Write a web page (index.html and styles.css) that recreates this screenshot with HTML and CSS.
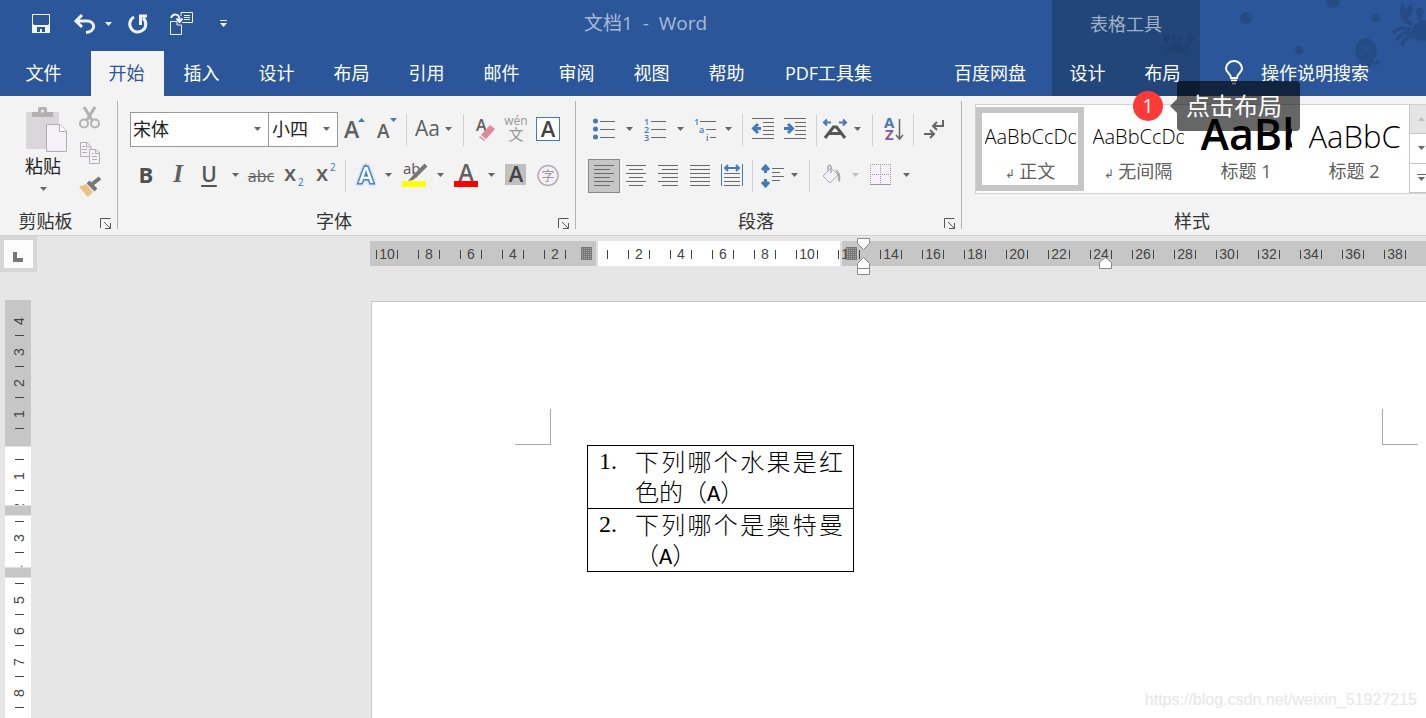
FILE: index.html
```html
<!DOCTYPE html>
<html lang="zh-CN">
<head>
<meta charset="utf-8">
<title>文档1 - Word</title>
<link rel="stylesheet" href="styles.css">
</head>
<body>
<header class="header">
  <svg class="decor" width="280" height="96" viewBox="0 0 280 96" aria-hidden="true">
    <defs>
      <g id="crab">
        <path d="M-8 6 C-8 -6 8 -6 8 6 L4 8 H-4 Z"/>
        <path d="M-8 0 C-14 -3 -15 -8 -13 -13 L-10 -9 L-8 -13 C-5 -8 -8 -5 -10 -4 L-6 -1 Z M8 0 C13 -1 12 -3 12 -5 C9 -7 10 -10 13 -12 L14 -8 L18 -9 C18 -4 15 -3 14 -2 C14 2 10 3 8 3 Z"/>
        <path d="M-8 2 C-13 0 -16 2 -18 4 M-8 4 C-13 3 -14 6 -16 8 M-7 6 C-11 6 -12 9 -13 11 M8 4 C12 4 14 6 17 6 M7 6 C11 7 12 9 14 10 M6 7 C9 9 10 11 11 13 M-3 -3 V-8 M3 -3 V-8" fill="none" stroke="#1e3a66" stroke-width="2"/>
        <circle cx="-3" cy="-8" r="2"/><circle cx="3" cy="-8" r="2"/>
      </g>
    </defs>
    <g fill="#1e3a66" opacity=".4">
      <use href="#crab" transform="translate(31 45)"/>
      <use href="#crab" transform="translate(279 26) scale(1.8)"/>
      <circle cx="100" cy="18" r="6"/><circle cx="230" cy="18" r="4"/><circle cx="187" cy="1" r="7"/><circle cx="153" cy="50" r="4"/>
      <path d="M211 58 C203 32 236 32 230 57 L227 59 C228 62 231 62 231 59 L234 61 C232 67 227 65 224 62 L226 67 H222 L219 62 L216 66 L212 63 L215 60 Z"/>
    </g>
    <g fill="none" stroke="#2b579a" stroke-width="1"><circle cx="215" cy="50" r="3"/><circle cx="223" cy="49" r="3"/><circle cx="103" cy="16" r="1"/><circle cx="232" cy="17" r="1"/></g>
  </svg>
  <div class="titlebar">
    <div class="quick-access">
      <button aria-label="保存"><svg width="20" height="20" viewBox="0 0 20 20"><path fill="#f2f2f2" fill-rule="evenodd" d="M1 0H19V19H1ZM2 1V10L3 11H17L18 10V1ZM6 13V18H9V15H11V18H14V13Z"/></svg></button>
      <button aria-label="撤消"><svg width="22" height="20" viewBox="0 0 22 20"><path d="M1 7H13C22 7 22 18 12 18.500M8 1L2 7L8 13" fill="none" stroke="#f2f2f2" stroke-width="3"/></svg></button>
      <button aria-label="撤消选项"><svg width="9" height="5"><path d="M1 0H8L4.500 4Z" fill="#f2f2f2"/></svg></button>
      <button aria-label="重复"><svg width="20" height="20" viewBox="0 0 20 20"><path d="M6 3A8 8 0 1 0 15 4M12.500 11V2H19" fill="none" stroke="#f2f2f2" stroke-width="3"/></svg></button>
      <button aria-label="粘贴到文档"><svg width="24" height="24" viewBox="0 0 24 24" fill="none" stroke="#f2f2f2"><path d="M.5 9.500H7V13H11.500V22.500H.5ZM11 4V.5H22.500V10.500H12M14 3.500H20M14 5.500H20M14 7.500H20"/><path d="M1 6C3 1 10 1 9.500 9M6.500 6.500L9.500 10L12.500 6.500" stroke-width="2"/></svg></button>
      <button aria-label="自定义快速访问工具栏"><svg width="9" height="8"><path d="M1 0H8V1H1ZM1 3H8L4.500 7Z" fill="#f2f2f2"/></svg></button>
    </div>
    <div class="doc-title">文档1&nbsp; -&nbsp; Word</div>
  </div>
  <nav class="tabs" aria-label="功能区">
    <button class="tab tab-file">文件</button>
    <button class="tab active">开始</button>
    <button class="tab">插入</button>
    <button class="tab">设计</button>
    <button class="tab">布局</button>
    <button class="tab">引用</button>
    <button class="tab">邮件</button>
    <button class="tab">审阅</button>
    <button class="tab">视图</button>
    <button class="tab">帮助</button>
    <button class="tab tab-pdf">PDF工具集</button>
    <button class="tab tab-disk">百度网盘</button>
  </nav>
  <div class="context">
    <div class="context-title">表格工具</div>
    <div class="context-tabs">
      <button class="tab">设计</button>
      <button class="tab">布局</button>
    </div>
    <span class="step">1</span>
    <span class="tip">点击布局</span>
  </div>
  <label class="tell-me">
    <svg width="18" height="25" viewBox="0 0 18 25" fill="none" stroke="#fff" stroke-width="2"><path d="M6 18C6 13 1 13 1 8.500A8 7.500 0 0 1 17 8.500C17 13 12 13 12 18ZM6 20.500H12M7 23.500H11"/></svg>
    <input type="text" placeholder="操作说明搜索" aria-label="操作说明搜索">
  </label>
</header>

<section class="ribbon">
  <div class="group clipboard">
    <div class="clip-body">
      <button class="paste">
        <svg width="42" height="46" viewBox="0 0 42 46"><rect y="5" width="33" height="37" rx="1" fill="#dad6da"/><path d="M6 5H12V2Q12 0 14 0H19Q21 0 21 2V5H27V10H6Z" fill="#b1b1b1"/><circle cx="16.500" cy="4" r="1.500" fill="#f2f2f2"/><path d="M20.500 17.500H34L40.500 24V44.500H20.500Z" fill="#f6f1f9" stroke="#b1adb1"/><path d="M33.500 17.500V24.500H40.500" fill="#fff" stroke="#b1adb1"/></svg>
        <span>粘贴</span>
        <svg class="caret" width="9" height="5"><path d="M1 0H8L4.500 4Z"/></svg>
      </button>
      <div class="clip-tools">
        <button aria-label="剪切"><svg width="22" height="23" viewBox="0 0 22 23" fill="none" stroke="#b1b1b1"><path d="M5 1L13 14M16 1L8 14" stroke-width="3"/><circle cx="5" cy="17.500" r="4" stroke-width="2"/><circle cx="16" cy="17.500" r="4" stroke-width="2"/></svg></button>
        <button aria-label="复制"><svg width="22" height="23" viewBox="0 0 22 23" fill="#f6f1f9" stroke="#b1adb1"><path d="M1.500 1.500H8L12 5.500V15.500H1.500ZM7.500 1.500V6H12M3 5.500H6M3 8.500H8M3 11.500H8"/><path d="M10.500 8.500H17L20.500 12V22.500H10.500ZM16.500 8.500V12.500H20.500M13 12.500H15M13 15.500H18M13 18.500H18"/></svg></button>
        <button aria-label="格式刷"><svg width="24" height="23" viewBox="0 0 24 23"><path d="M1 11L8 8L15 16L10 21Z" fill="#eac282"/><path d="M10 6L18 14M13 9L22 2" stroke="#777" stroke-width="4" fill="none"/></svg></button>
      </div>
    </div>
    <div class="group-label"><span>剪贴板</span><button class="launcher" aria-label="剪贴板设置"><svg width="12" height="12"><use href="#launch"/></svg></button></div>
  </div>

  <div class="group font">
    <div class="row font-row-1">
      <span class="combo"><select aria-label="字体"><option>宋体</option></select><svg class="caret" width="9" height="5"><path d="M1 0H8L4.500 4Z"/></svg></span>
      <span class="combo combo-size"><select aria-label="字号"><option>小四</option></select><svg class="caret" width="9" height="5"><path d="M1 0H8L4.500 4Z"/></svg></span>
      <button aria-label="增大字号"><svg width="22" height="26"><text class="glyph" x="1" y="21" font-size="23">A</text><path d="M15 5L18.500 1L22 5Z" fill="#4579b8"/></svg></button>
      <button aria-label="减小字号"><svg width="22" height="26"><text class="glyph" x="2" y="21" font-size="19">A</text><path d="M15 1H22L18.500 5Z" fill="#4579b8"/></svg></button>
      <i class="sep"></i>
      <button aria-label="更改大小写"><svg width="40" height="26"><text class="glyph-thin" x="1" y="19" font-size="21">Aa</text><path class="dark" d="M31 10H38L34.500 14Z"/></svg></button>
      <i class="sep"></i>
      <button aria-label="清除所有格式"><svg width="22" height="26"><text class="glyph" x="1" y="14" font-size="16">A</text><path d="M6 18L15 8L20 12L11 22ZM5 19L10 23L9 24L4 20Z" fill="#e5879a"/></svg></button>
      <button aria-label="拼音指南"><svg width="24" height="28"><text x="12" y="9" font-size="12" text-anchor="middle" fill="#999">wén</text><text x="12" y="24" font-size="15" text-anchor="middle" fill="#999">文</text></svg></button>
      <button aria-label="字符边框"><svg width="24" height="26"><rect x=".5" y=".5" width="23" height="23" fill="#fff" stroke="#4579b8"/><text class="glyph deep" x="12" y="20" font-size="22" text-anchor="middle">A</text></svg></button>
    </div>
    <div class="row font-row-2">
      <button class="bold" aria-label="加粗">B</button>
      <button class="italic" aria-label="倾斜">I</button>
      <button class="under" aria-label="下划线">U</button>
      <button aria-label="下划线选项"><svg class="caret" width="9" height="5"><path d="M1 0H8L4.500 4Z"/></svg></button>
      <button class="strike" aria-label="删除线">abc</button>
      <button aria-label="下标"><svg width="20" height="26"><text class="glyph" x="0" y="18" font-size="22">x</text><text x="14" y="23" font-size="10" fill="#2e75b6">2</text></svg></button>
      <button aria-label="上标"><svg width="20" height="26"><text class="glyph" x="0" y="18" font-size="22">x</text><text x="14" y="8" font-size="10" fill="#2e75b6">2</text></svg></button>
      <i class="sep"></i>
      <button aria-label="文本效果"><svg width="24" height="26"><text x="12" y="20" font-size="22" text-anchor="middle" font-weight="600" fill="#fff" stroke="#4a86c8" stroke-width="3" paint-order="stroke" class="glow">A</text></svg></button>
      <button aria-label="文本效果选项"><svg class="caret" width="9" height="5"><path d="M1 0H8L4.500 4Z"/></svg></button>
      <button aria-label="突出显示"><svg width="24" height="28"><text x="1" y="12" font-size="15" fill="#555">ab</text><path d="M24 3L13 14" stroke="#777" stroke-width="4"/><path d="M6 19L12 12L15 15L11 18Z" fill="#777"/><rect x="0" y="19" width="24" height="6" fill="#ff0"/></svg></button>
      <button aria-label="突出显示选项"><svg class="caret" width="9" height="5"><path d="M1 0H8L4.500 4Z"/></svg></button>
      <button aria-label="字体颜色"><svg width="24" height="28"><text class="glyph" x="12" y="19" font-size="23" text-anchor="middle">A</text><rect x="0" y="19" width="24" height="6" fill="#f00"/></svg></button>
      <button aria-label="字体颜色选项"><svg class="caret" width="9" height="5"><path d="M1 0H8L4.500 4Z"/></svg></button>
      <button aria-label="字符底纹"><svg width="22" height="24"><rect width="21" height="21" fill="#c0c0c0"/><text class="glyph deep" x="11" y="18" font-size="22" text-anchor="middle">A</text></svg></button>
      <button aria-label="带圈字符"><svg width="22" height="22"><circle cx="11" cy="10.500" r="10" fill="#f6f1f9" stroke="#b1adb1" stroke-width="1.500"/><text x="11" y="15" font-size="13" text-anchor="middle" fill="#999">字</text></svg></button>
    </div>
    <div class="group-label"><span>字体</span><button class="launcher" aria-label="字体设置"><svg width="12" height="12"><use href="#launch"/></svg></button></div>
  </div>

  <div class="group paragraph">
    <div class="row para-row-1">
      <button aria-label="项目符号"><svg width="24" height="26"><g fill="#4579b8"><circle cx="3.500" cy="4" r="2.500"/><circle cx="3.500" cy="12" r="2.500"/><circle cx="3.500" cy="20" r="2.500"/></g><path class="line" d="M8 4.500H23M8 12.500H23M8 20.500H23"/></svg></button>
      <button aria-label="项目符号选项"><svg class="caret" width="9" height="5"><path d="M1 0H8L4.500 4Z"/></svg></button>
      <button aria-label="编号"><svg width="24" height="26"><g fill="#4579b8" font-size="9" font-weight="600"><text x="1" y="8">1</text><text x="1" y="16">2</text><text x="1" y="24">3</text></g><path class="line" d="M8 4.500H23M8 12.500H23M8 20.500H23"/></svg></button>
      <button aria-label="编号选项"><svg class="caret" width="9" height="5"><path d="M1 0H8L4.500 4Z"/></svg></button>
      <button aria-label="多级列表"><svg width="24" height="26"><g fill="#4579b8" font-size="9" font-weight="600"><text x="1" y="8">1</text><text x="6" y="16">a</text><text x="13" y="24">i</text></g><path class="line" d="M7 4.500H23M13 12.500H23M17 20.500H23"/></svg></button>
      <button aria-label="多级列表选项"><svg class="caret" width="9" height="5"><path d="M1 0H8L4.500 4Z"/></svg></button>
      <i class="sep"></i>
      <button aria-label="减少缩进量"><svg width="22" height="24"><path class="line" d="M0 .5H22M11 4.500H22M11 8.500H22M11 12.500H22M11 16.500H22M0 20.500H22"/><path class="arrow" d="M9 10.500H2M6 6L1.500 10.500L6 15"/></svg></button>
      <button aria-label="增加缩进量"><svg width="22" height="24"><path class="line" d="M0 .5H22M11 4.500H22M11 8.500H22M11 12.500H22M11 16.500H22M0 20.500H22"/><path class="arrow" d="M0 10.500H8M4 6L8.500 10.500L4 15"/></svg></button>
      <i class="sep"></i>
      <button aria-label="中文版式"><svg width="24" height="24"><path class="arrow thin" d="M8 4.500H1M4 1.500L1 4.500L4 7.500M16 4.500H23M20 1.500L23 4.500L20 7.500"/><path d="M2 20L10.500 9H13.500L22 20M6 15.500H18" fill="none" stroke="#555" stroke-width="3"/></svg></button>
      <button aria-label="中文版式选项"><svg class="caret" width="9" height="5"><path d="M1 0H8L4.500 4Z"/></svg></button>
      <i class="sep"></i>
      <button aria-label="排序"><svg width="20" height="28"><text x="0" y="12" font-size="15" font-weight="700" fill="#4579b8">A</text><text x="1" y="24" font-size="15" font-weight="700" fill="#8a56a5">Z</text><path d="M15.500 3V22M12 19L15.500 23L19 19" fill="none" stroke="#666" stroke-width="1.500"/></svg></button>
      <i class="sep"></i>
      <button aria-label="显示编辑标记"><svg width="20" height="22" fill="none" stroke="#666" stroke-width="2"><path d="M19 1V7H9M13 3L9 7L13 11M0 15H10M6 11L10 15L6 19"/></svg></button>
    </div>
    <div class="row para-row-2">
      <button class="pressed" aria-label="左对齐" aria-pressed="true"><svg width="20" height="22"><path class="line" d="M0 .5H20M0 4.500H16M0 8.500H20M0 12.500H16M0 16.500H20M0 20.500H16"/></svg></button>
      <button aria-label="居中"><svg width="20" height="22"><path class="line" d="M0 .5H20M3 4.500H17M0 8.500H20M3 12.500H17M0 16.500H20M3 20.500H17"/></svg></button>
      <button aria-label="右对齐"><svg width="20" height="22"><path class="line" d="M0 .5H20M4 4.500H20M0 8.500H20M4 12.500H20M0 16.500H20M4 20.500H20"/></svg></button>
      <button aria-label="两端对齐"><svg width="20" height="22"><path class="line" d="M0 .5H20M0 4.500H20M0 8.500H20M0 12.500H20M0 16.500H20M0 20.500H20"/></svg></button>
      <button aria-label="分散对齐"><svg width="22" height="24"><path d="M.5 0V22M21.500 0V22" stroke="#4579b8"/><path class="line" d="M3 9.500H19M3 13.500H19M3 17.500H19M3 21.500H19"/><path class="arrow thin" d="M4 4H18M7 1L4 4L7 7M15 1L18 4L15 7"/></svg></button>
      <i class="sep"></i>
      <button aria-label="行距"><svg width="24" height="24"><path class="arrow" d="M4.500 3V9M1 6L4.500 2L8 6M4.500 15V21M1 18L4.500 22L8 18"/><path class="line" d="M11 4.500H23M11 8.500H19M11 12.500H23M11 16.500H19"/></svg></button>
      <button aria-label="行距选项"><svg class="caret" width="9" height="5"><path d="M1 0H8L4.500 4Z"/></svg></button>
      <i class="sep"></i>
      <button aria-label="底纹"><svg width="20" height="24"><path d="M9 4L16 11L8 19L1 12Z" fill="#f6f1f9" stroke="#aaa"/><path d="M6 7V2.500Q7.500 0 9 2.500V9" fill="none" stroke="#aaa" stroke-width="1.500"/><path d="M13 5Q20 8 18 18Q15 17 16 11Z" fill="#aaa"/></svg></button>
      <button aria-label="底纹选项"><svg class="caret faint" width="9" height="5"><path d="M1 0H8L4.500 4Z"/></svg></button>
      <button aria-label="边框"><svg width="20" height="24"><rect width="21" height="21" fill="#f6f1f9"/><path d="M.5 0V20M10.500 0V20M20.500 0V20M0 .5H21M0 10.500H21" stroke="#999" stroke-dasharray="1 1"/><path d="M0 20.500H21" stroke="#999"/></svg></button>
      <button aria-label="边框选项"><svg class="caret" width="9" height="5"><path d="M1 0H8L4.500 4Z"/></svg></button>
    </div>
    <div class="group-label"><span>段落</span><button class="launcher" aria-label="段落设置"><svg width="12" height="12"><use href="#launch"/></svg></button></div>
  </div>

  <div class="group styles">
    <div class="gallery">
      <button class="style selected"><span class="sample">AaBbCcDd</span><span class="style-name"><small>↲</small> 正文</span></button>
      <button class="style"><span class="sample">AaBbCcDd</span><span class="style-name"><small>↲</small> 无间隔</span></button>
      <button class="style"><span class="sample sample-h1">AaBb</span><span class="style-name">标题 1</span></button>
      <button class="style"><span class="sample sample-h2">AaBbC</span><span class="style-name">标题 2</span></button>
      <div class="scroller">
        <button class="off" aria-label="上一行"><svg class="caret faint" width="9" height="5"><path d="M1 4H8L4.500 0Z"/></svg></button>
        <button aria-label="下一行"><svg class="caret" width="9" height="5"><path d="M1 0H8L4.500 4Z"/></svg></button>
        <button aria-label="其他样式"><svg class="caret" width="9" height="8"><path d="M0 0H9V1H0ZM1 3H8L4.500 7Z"/></svg></button>
      </div>
    </div>
    <div class="group-label"><span>样式</span></div>
  </div>
</section>

<svg class="symbols" width="0" height="0" aria-hidden="true"><defs><g id="launch" fill="none" stroke="#555"><path d="M.5 10V.5H10.500M4 4L10 10M10.500 5V10.500H5"/></g></defs></svg>

<main class="workspace">
  <div class="side">
    <button class="tab-stop" aria-label="制表符"><svg width="10" height="10"><path d="M0 0H4V6H10V10H0Z" fill="#777"/></svg></button>
    <div class="v-ruler">
      <div class="v-cell"><span>4</span></div><div class="v-cell"><span>3</span></div><div class="v-cell"><span>2</span></div><div class="v-cell"><span>1</span></div>
      <div class="v-cell"></div><div class="v-cell"><span>1</span></div><div class="v-cell bar"><span>2</span></div><div class="v-cell"><span>3</span></div><div class="v-cell bar"><span>4</span></div>
      <div class="v-cell"><span>5</span></div><div class="v-cell"><span>6</span></div><div class="v-cell"><span>7</span></div><div class="v-cell"><span>8</span></div><div class="v-cell"><span>9</span></div>
    </div>
  </div>
  <div class="canvas">
    <div class="h-ruler">
      <div class="h-cell">10</div><div class="h-cell">8</div><div class="h-cell">6</div><div class="h-cell">4</div><div class="h-cell">2</div>
      <div class="h-cell zero"><i class="hatch"></i></div>
      <div class="h-cell">2</div><div class="h-cell">4</div><div class="h-cell">6</div><div class="h-cell">8</div><div class="h-cell">10</div>
      <div class="h-cell">12<i class="hatch hatch-12"></i><svg class="indents" width="13" height="38" fill="#fff" stroke="#888"><path d="M.5 .5H12.500V5.500L6.500 11.500L.5 5.500Z"/><path d="M.5 36.500V25.500L6.500 19.500L12.500 25.500V36.500ZM.5 30.500H12.500"/></svg></div>
      <div class="h-cell">14</div><div class="h-cell">16</div><div class="h-cell">18</div><div class="h-cell">20</div><div class="h-cell">22</div>
      <div class="h-cell">24<svg class="indent-right" width="13" height="13" fill="#fff" stroke="#888"><path d="M.5 11.500V5.500L6.500 .5L12.500 5.500V11.500Z"/></svg></div>
      <div class="h-cell">26</div><div class="h-cell">28</div><div class="h-cell">30</div><div class="h-cell">32</div><div class="h-cell">34</div><div class="h-cell">36</div><div class="h-cell">38</div>
    </div>
    <article class="page">
      <div class="corners"><i class="corner corner-left"></i><i class="corner corner-right"></i></div>
      <table class="questions">
        <tr><td><div class="item"><span class="num">1.</span><p>下列哪个水果是红色的（<span class="latin">A</span>）</p></div></td></tr>
        <tr><td><div class="item"><span class="num">2.</span><p>下列哪个是奥特曼（<span class="latin">A</span>）</p></div></td></tr>
      </table>
      <div class="watermark">https://blog.csdn.net/weixin_51927215</div>
    </article>
  </div>
</main>
</body>
</html>
```

FILE: styles.css
```css
* { box-sizing: border-box; }
body {
  margin: 0;
  height: 100vh;
  display: flex;
  flex-direction: column;
  overflow: hidden;
  background: #e6e6e6;
  font-family: "Open Sans", "Noto Sans CJK SC", sans-serif;
  font-size: 18px;
  color: #333;
}
button, input, select { font: inherit; color: inherit; }
button { border: 0; padding: 0; background: none; display: flex; align-items: center; justify-content: center; white-space: nowrap; }
svg { display: block; flex: none; overflow: visible; }
.symbols { position: absolute; }

/* Header */
.header {
  position: relative;
  z-index: 1;
  flex: none;
  display: grid;
  grid-template-columns: auto 148px 1fr;
  grid-template-rows: 51px 45px;
  background: #2b579a;
  color: #fff;
}
.decor { position: absolute; right: 0; top: 0; z-index: 1; clip-path: inset(0); pointer-events: none; }
.titlebar { display: flex; align-items: center; padding: 0 0 3px 31px; }
.quick-access { display: grid; grid-template-columns: 43px 30px 24px 42px 49px 20px; justify-items: start; align-items: center; }
.doc-title { flex: 1; text-align: center; font-size: 19px; line-height: 24px; padding-bottom: 2px; color: #a9bad5; }
.tabs { grid-row: 2; display: flex; gap: 2px; }
.tab { width: 73px; line-height: 45px; padding: 0 2px 0 0; flex: none; }
.tab-file { width: 89px; }
.tab-pdf { width: 127px; }
.tab-disk { width: 108px; margin: 0 7px 0 42px; }
.tab.active { background: #f3f3f3; color: #2b579a; }
.context { grid-column: 2; grid-row: 1 / 3; position: relative; background: #22457a; display: flex; flex-direction: column; }
.context-title { height: 51px; line-height: 48px; text-align: center; color: #a0b0c8; }
.context-tabs { display: flex; gap: 2px; }
.step { position: absolute; left: 81px; top: 91px; z-index: 2; width: 30px; height: 30px; border-radius: 50%; background: #ff3838; font-size: 20px; line-height: 29px; text-align: center; }
.tip { position: absolute; left: 125px; top: 81px; z-index: 2; width: 123px; height: 50px; border-radius: 4px; background: rgba(0, 0, 0, .6); font-size: 24px; line-height: 50px; padding-left: 9px; white-space: nowrap; }
.tip::before { content: ""; position: absolute; left: -7px; top: 18px; border: 7px solid transparent; border-left: 0; border-right-color: rgba(0, 0, 0, .6); }
.tell-me { grid-column: 3; grid-row: 2; display: flex; align-items: center; gap: 18px; padding: 0 0 2px 25px; }
.tell-me input { width: 160px; border: 0; padding: 0; background: none; outline: 0; }
.tell-me input::placeholder { color: #fff; opacity: 1; }

/* Ribbon */
.ribbon { flex: none; display: flex; height: 140px; background: #f3f3f3; border-bottom: 1px solid #d2d2d2; overflow: hidden; }
.group { flex: none; display: flex; flex-direction: column; margin: 5px 0 6px; border-right: 1px solid #b4b4b4; }
.group-label { position: relative; margin-top: auto; line-height: 15px; text-align: center; }
.launcher { position: absolute; right: 5px; bottom: -1px; }
.row { display: grid; align-items: center; justify-items: center; height: 35px; }
.row + .row { margin-top: 11px; }
.sep { width: 1px; height: 32px; background: #d0d0d0; }
.caret { fill: #666; }
.caret.faint { fill: #c0c0c0; }
.dark { fill: #666; }
.glyph { font-weight: 600; fill: #606060; }
.glyph-thin { fill: #606060; }
.deep { fill: #444; }
.glow { filter: drop-shadow(0 0 1px #8ab8e6); }
.line { fill: none; stroke: #6a6a6a; }
.arrow { fill: none; stroke: #4579b8; stroke-width: 3; }
.arrow.thin { stroke-width: 2; }

.clipboard { width: 118px; }
.clip-body { display: flex; gap: 11px; padding: 5px 0 0 19px; }
.paste { flex-direction: column; justify-content: flex-start; width: 48px; padding-top: 1px; color: #222; }
.paste span { line-height: 26px; }
.paste .caret { margin-top: 8px; }
.paste svg:first-child { margin-left: 8px; }
.clip-tools { display: flex; flex-direction: column; align-items: center; gap: 12px; }
.clipboard .group-label { padding-right: 26px; }

.font { padding: 11px 7px 0 12px; }
.paragraph { padding: 11px 13px 0 12px; }
.font .launcher { right: -2px; }
.paragraph .launcher { right: -8px; }
.font .group-label { padding-right: 30px; }
.paragraph .group-label { padding-right: 24px; }
.font-row-1 { grid-template-columns: 139px 69px 32px 32px 8px 48px 10px 36px 24px 40px; }
.font-row-2 { grid-template-columns: 32px 32px 30px 22px 30px 36px 28px 10px 32px 12px 40px 12px 40px 10px 40px 24px; }
.para-row-1 { grid-template-columns: 32px 18px 34px 16px 34px 12px 16px 26px 38px 4px 34px 10px 20px 24px 14px 28px; }
.para-row-2 { grid-template-columns: 32px 32px 32px 32px 32px 9px 32px 10px 20px 26px 20px 30px 22px; }
.combo { position: relative; width: 100%; }
.combo select { display: block; width: 100%; height: 35px; appearance: none; border: 1px solid #999; border-radius: 0; background: #fff; padding: 0 2px 2px; color: #222; }
.combo-size select { border-left-width: 0; padding-left: 3px; }
.combo .caret { position: absolute; right: 7px; top: 15px; pointer-events: none; }
.bold { font-size: 22px; line-height: 30px; font-weight: 700; color: #505050; padding-bottom: 4px; }
.italic { font: italic 700 25px/30px "Liberation Serif", serif; color: #606060; padding-bottom: 3px; }
.under { font-size: 21px; line-height: 30px; font-weight: 600; color: #555; text-decoration: underline 2px; text-underline-offset: 3px; padding-bottom: 3px; }
.strike { font-size: 16px; color: #606060; text-decoration: line-through; }
.pressed { width: 32px; height: 34px; background: #c6c6c6; border: 1px solid #8a8a8a; }

.styles { flex: 1 0 0; padding: 3px 0 0 13px; border: 0; }
.gallery { display: flex; height: 90px; border: 1px solid #d2d2d2; border-right: 0; background: #fff; }
.style { flex: none; width: 108px; height: 84px; margin-top: 2px; flex-direction: column; justify-content: flex-start; border: 6px solid transparent; padding: 0 3px; }
.style.selected { border-color: #c6c6c6; }
.sample { width: 91px; height: 45px; line-height: 48px; overflow: hidden; text-align: left; font-family: "Open Sans", sans-serif; font-weight: 300; font-size: 20px; color: #000; }
.sample-h1 { font-size: 43px; font-weight: 600; line-height: 42px; }
.sample-h2 { font-size: 31px; line-height: 46px; }
.style-name { line-height: 28px; color: #606060; }
.style-name small { font: 12px "DejaVu Sans", sans-serif; }
.scroller { flex: none; display: flex; flex-direction: column; width: 24px; margin-left: 1px; border-left: 1px solid #c6c6c6; }
.scroller button { flex: 1; border-bottom: 1px solid #c6c6c6; }
.scroller .off { background: #e4e4e4; }
.styles .group-label { padding-right: 24px; }

/* Workspace */
.workspace { flex: 1; display: flex; min-height: 0; }
.side { flex: none; width: 37px; }
.tab-stop { width: 37px; height: 36px; border: 4px solid #d6d6d6; background: #fcfcfc; padding: 6px 2px 0 0; }
.v-ruler { width: 26px; margin: 28px 0 0 5px; padding-top: 5px; background: linear-gradient(#c6c6c6 146px, #e0e0e0 146px 147px, #fff 147px); font: 14px "Liberation Sans", sans-serif; color: #444; }
.v-cell { position: relative; height: 31px; display: flex; align-items: center; justify-content: center; padding-left: 2px; }
.v-cell span { transform: rotate(-90deg); line-height: 16px; }
.v-cell::before { content: ""; position: absolute; left: 10px; bottom: 0; width: 9px; height: 1px; background: #444; }
.v-cell.bar::after { content: ""; position: absolute; left: 0; right: 0; top: 14px; height: 9px; background: #c6c6c6; border: solid #e0e0e0; border-width: 1px 0; }
.canvas { flex: 1; display: flex; flex-direction: column; min-width: 0; padding: 5px 0 0 334px; }
.h-ruler { display: flex; flex: none; height: 25px; margin-left: -1px; padding-left: 6px; background: linear-gradient(90deg, #c6c6c6 226px, #e0e0e0 226px 228px, #fff 228px 470px, #e0e0e0 470px 472px, #c6c6c6 472px); font: 14px/26px "Liberation Sans", sans-serif; color: #444; }
.h-cell { position: relative; flex: none; width: 42px; padding-right: 20px; display: flex; justify-content: center; }
.h-cell::before, .h-cell::after { content: ""; position: absolute; left: 0; top: 9px; width: 1px; height: 9px; background: #444; }
.h-cell::after { left: 21px; }
.h-cell.zero::before { display: none; }
.hatch { position: absolute; left: -5px; top: 6px; width: 11px; height: 13px; background: repeating-linear-gradient(90deg, #777 0 1px, transparent 1px 2px), repeating-linear-gradient(#777 0 1px, #aaa 1px 2px); }
.hatch-12 { left: 8px; z-index: 1; }
.indents { position: absolute; left: 19px; top: -3px; z-index: 1; }
.indent-right { position: absolute; left: 9px; top: 16px; z-index: 1; }
.page { position: relative; flex: 1; margin-top: 35px; border: solid #c6c6c6; border-width: 1px 0 0 1px; background: #fff; }
.corners { display: flex; justify-content: space-between; padding: 107px 8px 0 143px; }
.corner { width: 36px; height: 36px; border: 0 solid #aaa; border-bottom-width: 1px; }
.corner-left { border-right-width: 1px; }
.corner-right { border-left-width: 1px; }
.questions { width: 267px; margin-left: 215px; border-collapse: collapse; font: 300 24px/30px "Noto Sans CJK SC", sans-serif; color: #000; }
.questions td { border: 1px solid #000; padding: 0 10px 2px 11px; }
.item { display: flex; }
.num { width: 36px; flex: none; font-family: "Liberation Serif", serif; font-weight: 400; }
.item p { margin: 0; flex: 1; text-align: justify; text-spacing-trim: space-all; }
.latin { font-family: "Liberation Mono", monospace; font-size: 22px; font-weight: 400; line-height: 20px; }
.watermark { position: absolute; right: 9px; bottom: 8px; font: 16px/20px "Liberation Sans", sans-serif; color: #e6e6e6; }
```
